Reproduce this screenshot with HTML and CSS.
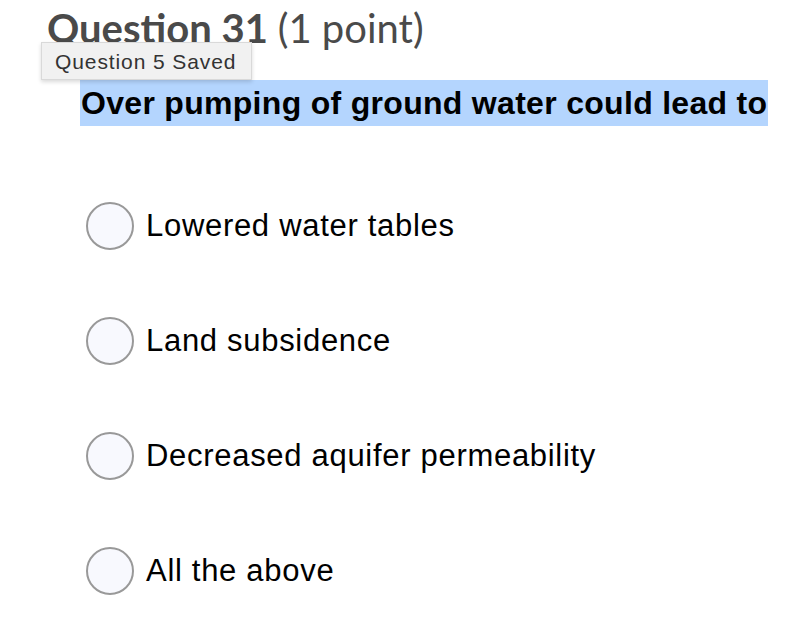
FILE: index.html
```html
<!DOCTYPE html>
<html>
<head>
<meta charset="utf-8">
<link rel="stylesheet" href="styles.css">
</head>
<body>
<div class="page">
  <h2 class="title"><span class="title-main">Question 31</span> <span class="title-pts">(1 point)</span></h2>
  <div class="tooltip">Question 5 Saved</div>
  <p class="question"><span class="hl">Over pumping of ground water could lead to</span></p>
  <ul class="options">
    <li class="option"><span class="radio"></span><span class="label">Lowered water tables</span></li>
    <li class="option"><span class="radio"></span><span class="label">Land subsidence</span></li>
    <li class="option"><span class="radio"></span><span class="label">Decreased aquifer permeability</span></li>
    <li class="option"><span class="radio"></span><span class="label">All the above</span></li>
  </ul>
</div>
</body>
</html>
```
FILE: styles.css
```css
html, body {
  margin: 0;
  padding: 0;
  background: #ffffff;
}
.page {
  position: relative;
  padding: 0 0 0 47px;
}
.title {
  margin: 0;
  font-family: Lato, "Liberation Sans", sans-serif;
  font-size: 40px;
  line-height: 56px;
  color: #4a4a4a;
  font-weight: 700;
}
.title-pts {
  font-weight: 400;
}
.tooltip {
  position: absolute;
  left: 41px;
  top: 42px;
  width: 211px;
  height: 38px;
  box-sizing: border-box;
  padding: 6px 0 0 13px;
  background: #f1f1f1;
  border: 1px solid #d9d9d9;
  box-shadow: 0 2px 4px rgba(0,0,0,0.15);
  font-family: "Liberation Sans", Arial, sans-serif;
  font-size: 21px;
  letter-spacing: 0.9px;
  line-height: 26px;
  color: #333333;
}
.question {
  margin: 24px 0 0 33px;
  font-family: "Liberation Sans", Arial, sans-serif;
  font-weight: 700;
  font-size: 32px;
  letter-spacing: 0.3px;
  line-height: 46px;
  color: #000;
}
.hl {
  display: inline-block;
  background: #b4d5fe;
  padding: 0 1px;
}
.options {
  list-style: none;
  margin: 76px 0 0 39px;
  padding: 0;
  display: flex;
  flex-direction: column;
  gap: 67px;
}
.option {
  display: flex;
  align-items: center;
  gap: 12px;
  height: 48px;
}
.radio {
  width: 48px;
  height: 48px;
  box-sizing: border-box;
  border-radius: 50%;
  border: 2px solid #999;
  background: #f8f9fe;
  flex: none;
}
.label {
  font-family: "Liberation Sans", Arial, sans-serif;
  font-size: 31px;
  letter-spacing: 0.7px;
  color: #000;
}
```
